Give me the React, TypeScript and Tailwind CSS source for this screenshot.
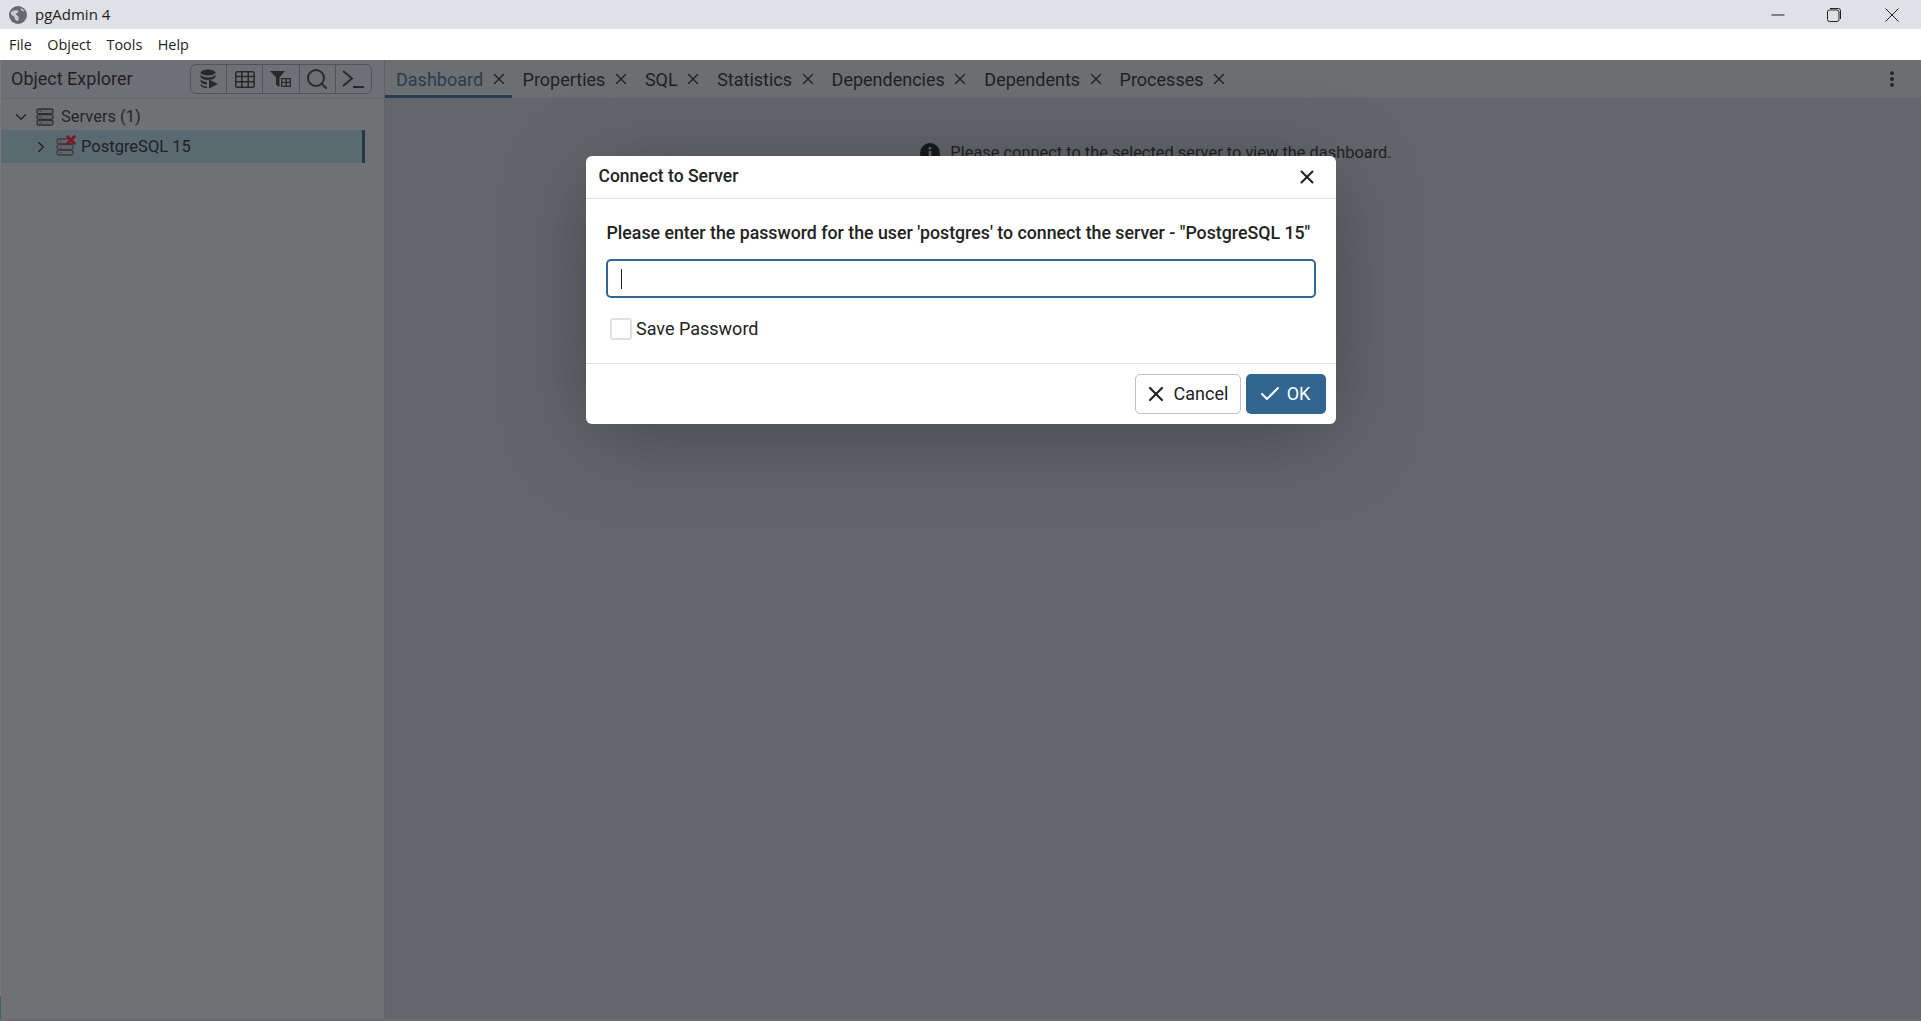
import { Check, ChevronDown, ChevronRight, MoreVertical, Search, X } from 'lucide-react';

const tabs = ['Dashboard', 'Properties', 'SQL', 'Statistics', 'Dependencies', 'Dependents', 'Processes'];
const menus = ['File', 'Object', 'Tools', 'Help'];

const ServerIcon = ({ className }: { className: string }) => (
  <svg viewBox="0 0 18 18" className={className} fill="none" stroke="currentColor" strokeWidth="1.3">
    <rect x="1" y="1" width="16" height="4.6" rx="1.5" fill="#c9cbd2" />
    <rect x="1" y="6.7" width="16" height="4.6" rx="1.5" fill="#c9cbd2" />
    <rect x="1" y="12.4" width="16" height="4.6" rx="1.5" fill="#c9cbd2" />
    <path d="M3.5 3.3h2M3.5 9h2M3.5 14.7h2" strokeWidth="0.9" />
  </svg>
);

const ToolButton = ({ children, last }: { children: React.ReactNode; last?: boolean }) => (
  <div className={`flex h-full flex-1 items-center justify-center ${last ? '' : 'border-r border-[#9a9da3]'}`}>
    {children}
  </div>
);

export default function App() {
  return (
    <div className="flex h-screen w-full flex-col overflow-hidden bg-white font-['Roboto',sans-serif] text-[18px] text-[#222222]">
      {/* Window title bar */}
      <header className="flex h-[29px] shrink-0 items-center bg-[#dee1e6] pl-[9px] font-['Open_Sans',sans-serif] text-[15px]">
        <svg viewBox="0 0 20 20" className="h-[18px] w-[18px]">
          <circle cx="10" cy="10" r="10" fill="#66696e" />
          <path d="M2 7c2-2 5-3 8-2 1 1 0 3-2 3-1 1 0 2 2 3 1 1 1 3 0 6-3-1-4-3-4-5-2-1-4-2-4-5zM13 2.5c1.500.5 3 1.500 4 3-1 .5-2.500 0-3-.5s-1.500-1.500-1-2.500z" fill="#c8cbd0" />
        </svg>
        <span className="ml-[8px]">pgAdmin 4</span>
        <div className="ml-auto flex items-center pr-[22px]">
          <svg viewBox="0 0 14 14" className="h-[14px] w-[14px]" fill="none" stroke="#222" strokeWidth="1">
            <path d="M0.5 7h13" />
          </svg>
          <svg viewBox="0 0 14 14" className="ml-[42px] h-[14px] w-[14px]" fill="none" stroke="#222" strokeWidth="1">
            <rect x="0.5" y="2" width="11.5" height="11.5" rx="2" />
            <path d="M3 0.5h8.500a2 2 0 0 1 2 2V11" />
          </svg>
          <svg viewBox="0 0 14 14" className="ml-[44px] h-[14px] w-[14px]" fill="none" stroke="#222" strokeWidth="1">
            <path d="M0.5 0.5l13 13M13.5 0.5l-13 13" />
          </svg>
        </div>
      </header>

      {/* Menu bar */}
      <nav className="flex h-[31px] shrink-0 items-center gap-[15.5px] bg-white pl-[9px] font-['Open_Sans',sans-serif] text-[14.4px]">
        {menus.map((m) => (
          <span key={m}>{m}</span>
        ))}
      </nav>

      <div className="relative flex min-h-0 flex-1 flex-col">
        <div className="flex min-h-0 flex-1">
          <div className="flex w-px flex-col bg-white">
            <div className="flex-1" />
            <div className="h-[23px] bg-[#5ed58f]" />
          </div>

          {/* Object explorer */}
          <aside className="flex w-[384px] shrink-0 flex-col border-r border-[#c4c6cc] bg-[#e8e9ec]">
            <div className="flex h-[39px] shrink-0 items-center border-b border-[#d2d4d9] bg-[#e6e7ea] pl-[10px] pr-[12px]">
              <span className="-mt-[2px]">Object Explorer</span>
              <div className="ml-auto flex h-[30px] w-[182px] rounded-[6px] border border-[#9a9da3] text-[#333]">
                <ToolButton>
                  <svg viewBox="0 0 20 20" className="h-[20px] w-[20px]" fill="currentColor">
                    <ellipse cx="9" cy="3.5" rx="7.5" ry="3" />
                    <path d="M1.5 5.5c1 2 4 3 7.500 3s6.500-1 7.500-3V8c-1 2-4 3-7.500 3H9c-3.500 0-6.500-1-7.500-3zM1.500 10c1 2 3.500 3 6.500 3v2.500c-3 0-5.500-1-6.500-3zM1.500 14.500c1 2 3.500 3 6.500 3V19c-3.500 0-6.500-1.500-6.500-3zM10 10.500l9 4.500-9 4.500z" />
                  </svg>
                </ToolButton>
                <ToolButton>
                  <svg viewBox="0 0 20 17" className="h-[17px] w-[20px]" fill="none" stroke="currentColor" strokeWidth="1.5">
                    <rect x="0.8" y="0.8" width="18.4" height="15.4" rx="1.5" />
                    <path d="M0.8 5.500h18.400M0.8 10.800h18.400M6.800 0.800v15.400M13.200 0.800v15.400" />
                  </svg>
                </ToolButton>
                <ToolButton>
                  <svg viewBox="0 0 22 20" className="h-[20px] w-[22px]" fill="currentColor">
                    <path d="M0 2h15l-5.500 6.500V18L6 16V8.500z" />
                    <path d="M11 9h10v9H11zm1.300 1.300v2.500h3.200v-2.500zm4.600 0v2.500h2.800v-2.500zm-4.600 3.800v2.600h3.200v-2.600zm4.600 0v2.600h2.800v-2.600z" />
                  </svg>
                </ToolButton>
                <ToolButton>
                  <Search size={24} strokeWidth={2} />
                </ToolButton>
                <ToolButton last>
                  <svg viewBox="0 0 24 20" className="h-[20px] w-[24px]" fill="none" stroke="currentColor" strokeWidth="2">
                    <path d="M2 2l9 7.500L2 17M12 18h11" />
                  </svg>
                </ToolButton>
              </div>
            </div>

            <div className="flex h-[31px] items-center pl-[11px] pt-[5px] text-[16.5px] text-[#2c2c2c]">
              <ChevronDown size={18} />
              <ServerIcon className="ml-[6px] h-[18px] w-[18px] text-[#444]" />
              <span className="ml-[7px]">Servers (1)</span>
            </div>
            <div className="mr-[19px] flex h-[33px] items-center border-r-[3px] border-[#235a87] bg-[#b5d5e0] pl-[31px] text-[16.5px]">
              <ChevronRight size={18} />
              <div className="relative ml-[6px] h-[18px] w-[18px]">
                <ServerIcon className="h-[18px] w-[18px] text-[#666]" />
                <X size={14} strokeWidth={4.5} className="absolute -right-[4px] -top-[5px] text-[#ff0a2a]" />
              </div>
              <span className="ml-[7px] pt-[2px]">PostgreSQL 15</span>
            </div>
          </aside>

          {/* Dashboard area */}
          <main className="flex min-w-0 flex-1 flex-col bg-[#c9cdd3]">
            <div className="flex h-[39px] shrink-0 items-stretch border-b border-[#c0c3c9] bg-[#dfe0e4]">
              {tabs.map((t, i) => (
                <div
                  key={t}
                  className={`flex items-center gap-[6.5px] border-b-[3px] pl-[11px] pr-[4px] pt-[3px] ${i === 0 ? 'border-[#2f6896] text-[#33688f]' : 'border-transparent'}`}
                >
                  <span>{t}</span>
                  <X size={18} strokeWidth={1.8} className="text-[#222]" />
                </div>
              ))}
              <div className="ml-auto flex items-center pr-[19px]">
                <MoreVertical size={20} strokeWidth={2.6} />
              </div>
            </div>
            <div className="flex items-center justify-center gap-[10px] pl-[6px] pt-[42px] text-[16.4px]">
              <svg viewBox="0 0 20 20" className="h-[20px] w-[20px]">
                <circle cx="10" cy="10" r="10" fill="#111" />
                <path d="M8.700 4h2.600v2.500H8.700zM8.700 8h2.600v8H8.700z" fill="#c9cdd3" />
              </svg>
              <span>Please connect to the selected server to view the dashboard.</span>
            </div>
          </main>
        </div>
        <div className="h-[2px] shrink-0 bg-[#d8d8e4]" />

        {/* Modal backdrop and dialog */}
        <div className="absolute inset-0 flex items-start justify-center bg-[#202226]/60 pt-[96px]">
          <div className="w-[750px] rounded-[6px] bg-white shadow-[0_14px_90px_rgba(0,0,0,0.3)]">
            <div className="flex h-[43px] items-center justify-between border-b border-[#dde0e6] pl-[13px] pr-[18px]">
              <span className="-mt-[2px] text-[17.5px] font-medium">Connect to Server</span>
              <X size={22} strokeWidth={2.2} />
            </div>
            <div className="h-[164px] px-[20px] pt-[23px]">
              <p className="pl-[1px] text-[17.75px] font-medium leading-[22px]">
                Please enter the password for the user 'postgres' to connect the server - "PostgreSQL 15"
              </p>
              <div className="mt-[15px] flex h-[39px] items-center rounded-[5px] border-2 border-[#326690] pl-[13px]">
                <div className="h-[20px] w-px bg-[#222]" />
              </div>
              <label className="ml-[4px] mt-[17px] flex items-center gap-[4.5px]">
                <span className="h-[22px] w-[22px] rounded-[3px] border-2 border-[#dde0e6] bg-white" />
                <span>Save Password</span>
              </label>
            </div>
            <div className="flex h-[61px] items-center justify-end gap-[5px] border-t border-[#dde0e6] pr-[10px]">
              <button className="flex h-[40px] w-[106px] items-center justify-center gap-[6px] rounded-[5px] border border-[#bcc0cc] bg-white pr-[3px]">
                <X size={24} strokeWidth={2.2} />
                <span className="pb-[2px]">Cancel</span>
              </button>
              <button className="flex h-[40px] w-[80px] items-center justify-center gap-[5px] rounded-[5px] bg-[#326690] pr-[3px] text-white">
                <Check size={24} strokeWidth={2} />
                <span className="pb-[2px]">OK</span>
              </button>
            </div>
          </div>
        </div>
      </div>
    </div>
  );
}
